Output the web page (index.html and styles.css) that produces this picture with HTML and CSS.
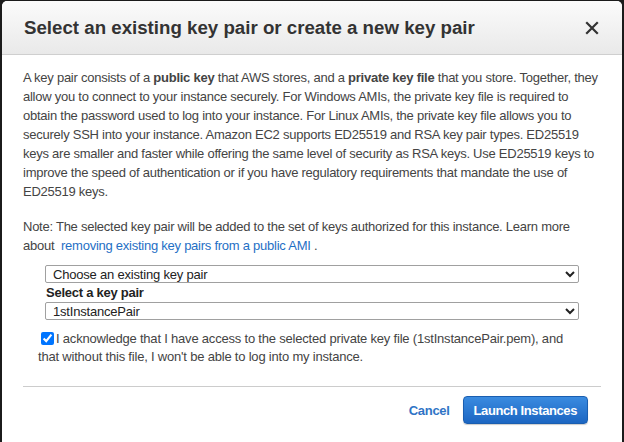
FILE: index.html
```html
<!DOCTYPE html>
<html lang="en">
<head>
<meta charset="utf-8">
<title>Select key pair</title>
<link rel="stylesheet" href="styles.css">
</head>
<body>
<div class="dialog">
  <div class="header">
    <h1 class="title">Select an existing key pair or create a new key pair</h1>
    <button class="close" aria-label="Close">
      <svg width="14" height="14" viewBox="0 0 14 14"><path d="M2 2 L12 12 M12 2 L2 12" stroke="#333" stroke-width="2.2" stroke-linecap="square" fill="none"/></svg>
    </button>
  </div>
  <div class="body">
    <p class="para">A key pair consists of a <b>public key</b> that AWS stores, and a <b>private key file</b> that you store. Together, they<br>allow you to connect to your instance securely. For Windows AMIs, the private key file is required to<br>obtain the password used to log into your instance. For Linux AMIs, the private key file allows you to<br>securely SSH into your instance. Amazon EC2 supports ED25519 and RSA key pair types. ED25519<br>keys are smaller and faster while offering the same level of security as RSA keys. Use ED25519 keys to<br>improve the speed of authentication or if you have regulatory requirements that mandate the use of<br>ED25519 keys.</p>
    <p class="para note">Note: The selected key pair will be added to the set of keys authorized for this instance. Learn more<br>about&nbsp; <a class="link" href="#">removing existing key pairs from a public AMI</a> .</p>
    <div class="fields">
      <select class="select">
        <option>Choose an existing key pair</option>
      </select>
      <label class="label">Select a key pair</label>
      <select class="select">
        <option>1stInstancePair</option>
      </select>
    </div>
    <p class="ack"><input class="check" type="checkbox" checked>I acknowledge that I have access to the selected private key file (1stInstancePair.pem), and<br>that without this file, I won't be able to log into my instance.</p>
    <div class="footer">
      <a class="cancel" href="#">Cancel</a>
      <button class="launch">Launch Instances</button>
    </div>
  </div>
</div>
</body>
</html>
```

FILE: styles.css
```css
html, body {
  margin: 0;
  padding: 0;
  height: 100%;
}
body {
  background: #1b1b1b;
  font-family: "Liberation Sans", Arial, sans-serif;
  overflow: hidden;
}
.dialog {
  margin: 1px 2px 0;
  background: #fff;
  border-radius: 5px 5px 0 0;
  height: 441px;
  overflow: hidden;
}
.header {
  height: 53px;
  border-bottom: 1px solid #cfcfcf;
  background: linear-gradient(#fbfbfb, #e9e9e9);
  display: flex;
  align-items: center;
  justify-content: space-between;
  padding: 0 23px 0 22px;
  border-radius: 5px 5px 0 0;
}
.title {
  margin: 0;
  font-size: 18.7px;
  font-weight: bold;
  color: #333;
  padding-top: 1px;
}
.close {
  background: none;
  border: 0;
  padding: 0;
  width: 14px;
  height: 14px;
  display: flex;
  margin-top: 1px;
}
.body {
  padding: 13px 21px 0;
  color: #444;
  font-size: 13px;
  line-height: 19px;
  letter-spacing: -0.25px;
}
.para {
  margin: 0 0 16px;
  white-space: nowrap;
}
.note {
  margin-bottom: 10px;
}
.link {
  color: #1f6fc5;
  text-decoration: none;
}
.fields {
  margin: 0 22px;
  display: flex;
  flex-direction: column;
}
.select {
  height: 18px;
  font-family: "Liberation Sans", Arial, sans-serif;
  font-size: 13px;
  letter-spacing: -0.2px;
  color: #222;
  border: 1px solid #a0a0a0;
  border-radius: 2px;
  background: #fff;
  padding: 0 0 0 3px;
  margin: 0;
}
.label {
  font-weight: bold;
  color: #222;
  line-height: 19px;
  padding-left: 1px;
}
.ack {
  margin: 10px 15px 0;
  line-height: 18px;
  letter-spacing: -0.2px;
  white-space: nowrap;
}
.check {
  width: 13px;
  height: 13px;
  margin: 0 2px 0 3px;
  vertical-align: -2px;
}
.footer {
  margin-top: 20px;
  border-top: 1px solid #cccccc;
  padding-top: 9px;
  display: flex;
  justify-content: flex-end;
  align-items: center;
  gap: 13px;
  padding-right: 13px;
}
.cancel {
  color: #2f74c6;
  font-weight: bold;
  text-decoration: none;
  font-size: 13px;
  letter-spacing: -0.3px;
}
.launch {
  height: 28px;
  padding: 0 10px;
  border: 1px solid #1a5eb0;
  border-radius: 4px;
  background: linear-gradient(#3a8be0, #1c66c2);
  color: #fff;
  font-family: "Liberation Sans", Arial, sans-serif;
  font-weight: bold;
  font-size: 13px;
  letter-spacing: -0.4px;
  box-shadow: 0 1px 1px rgba(0,0,0,0.2);
}
```
